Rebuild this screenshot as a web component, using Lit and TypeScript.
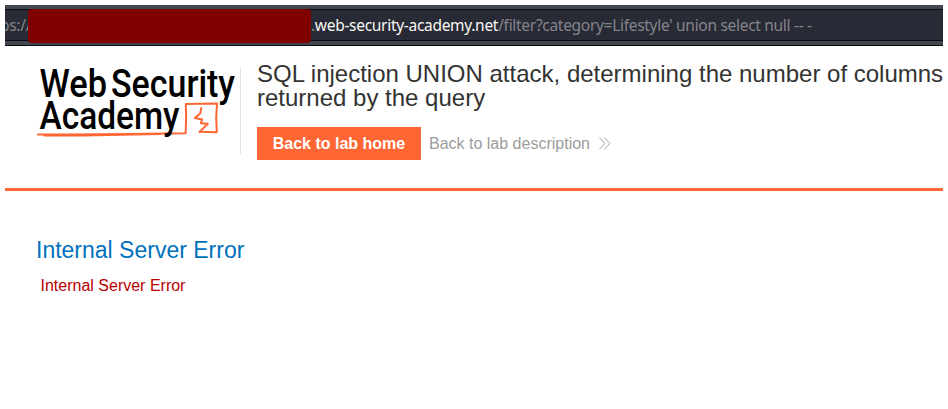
import { LitElement, html, css, svg } from "lit";
import { customElement } from "lit/decorators.js";

@customElement("address-bar")
class AddressBar extends LitElement {
  static styles = css`
    :host { display: block; height: 41px; background: #42464e; overflow: hidden; box-sizing: border-box; border-bottom: 1px solid #0c0c12; padding-top: 4px; }
    .field { display: flex; align-items: flex-start; box-sizing: border-box; height: 32px; background: #282a36; border-top: 1px solid #0c0c12; border-bottom: 1px solid #0c0c12; font: 15.5px/31px "Noto Sans", sans-serif; letter-spacing: -0.3px; color: #84858a; white-space: pre; }
    .scheme { width: 23px; text-indent: -5px; overflow: hidden; flex: none; }
    .mask { width: 283px; height: 34px; margin-top: -1px; border-radius: 4px; background: #800000; flex: none; position: relative; }
    .host { color: #f8f8f2; flex: none; }
    .dot { color: #84858a; }
  `;
  render() {
    return html`<div class="field"><span class="scheme">ps://</span><span class="mask"></span><span class="host"><span class="dot">.</span>web-security-academy.net</span><span>/filter?category=Lifestyle' union select null -- -</span></div>`;
  }
}

@customElement("academy-logo")
class AcademyLogo extends LitElement {
  static styles = css`
    :host { display: block; width: 204px; height: 80px; }
    svg { display: block; overflow: visible; }
    text { font-family: Roboto, sans-serif; font-weight: 500; font-size: 38px; fill: #000; }
    .mark { fill: none; stroke: #ff6633; stroke-linejoin: round; stroke-linecap: round; }
  `;
  render() {
    return html`<svg width="204" height="80" viewBox="36 64 204 80">
      ${svg`
        <path class="mark" stroke-width="2" d="M38 134.5 L70 134.6 L130 134 L185.6 133.2 Q186.6 118 185.8 104 L200 103.8 L217 103.4 L216.2 118 L216.8 132.2 L199.5 131.8"/>
        <path class="mark" stroke-width="1.6" d="M44 135.6 L84 135.6 L160 134.2"/>
        <path class="mark" stroke-width="2" d="M201.3 108 L200.2 113.4 L194.8 118 L202.2 119.4 L200.8 123.2 L207.8 123.8 L199.8 131.6"/>
        <text x="39.5" y="96.6" textLength="67.5" lengthAdjust="spacingAndGlyphs">Web</text>
        <text x="111" y="96.6" textLength="124" lengthAdjust="spacingAndGlyphs">Security</text>
        <text x="39.5" y="129.2" textLength="140" lengthAdjust="spacingAndGlyphs">Academy</text>`}
    </svg>`;
  }
}

@customElement("app-root")
class AppRoot extends LitElement {
  static styles = css`
    :host { display: block; box-sizing: border-box; width: 948px; height: 409px; padding: 5px; background: #fff; overflow: hidden; font-family: "Liberation Sans", Arial, sans-serif; }
    .header { display: flex; height: 142px; border-bottom: 3px solid #ff6633; box-sizing: content-box; }
    .logo { margin: 18px 0 0 31px; flex: none; }
    .text { flex: none; box-sizing: border-box; width: 703px; height: 86px; margin-top: 22px; border-left: 1px solid #e3e3e3; padding-left: 16px; }
    h2 { margin: -6px 0 0; font-size: 24px; line-height: 24px; font-weight: 400; color: #333332; white-space: nowrap; }
    .actions { display: flex; align-items: center; margin-top: 17px; font-size: 16px; }
    .home { box-sizing: border-box; width: 164px; height: 33px; line-height: 33px; text-align: center; background: #ff6633; color: #fff; font-weight: 700; }
    .back { display: flex; align-items: center; margin-left: 8px; color: #9c9c9c; }
    .back svg { margin-left: 9px; }
    .error { padding: 44px 31px 0; }
    h4 { margin: 0; font-size: 23px; line-height: 30px; font-weight: 400; color: #0071bc; }
    p { margin: 12px 0 0 4.5px; font-size: 16px; line-height: 18px; color: #b80000; }
  `;
  render() {
    return html`
      <address-bar></address-bar>
      <div class="header">
        <academy-logo class="logo"></academy-logo>
        <div class="text">
          <h2>SQL injection UNION attack, determining the number of columns<br>returned by the query</h2>
          <div class="actions">
            <span class="home">Back to lab home</span>
            <span class="back">Back to lab description
              <svg width="12" height="13" viewBox="0 0 12 13" fill="none" stroke="#9c9c9c"><path d="M.4 .7 5.8 6.5 .4 12.3M5.4 .7 10.8 6.5 5.4 12.3"/></svg>
            </span>
          </div>
        </div>
      </div>
      <div class="error"><h4>Internal Server Error</h4><p>Internal Server Error</p></div>
    `;
  }
}
